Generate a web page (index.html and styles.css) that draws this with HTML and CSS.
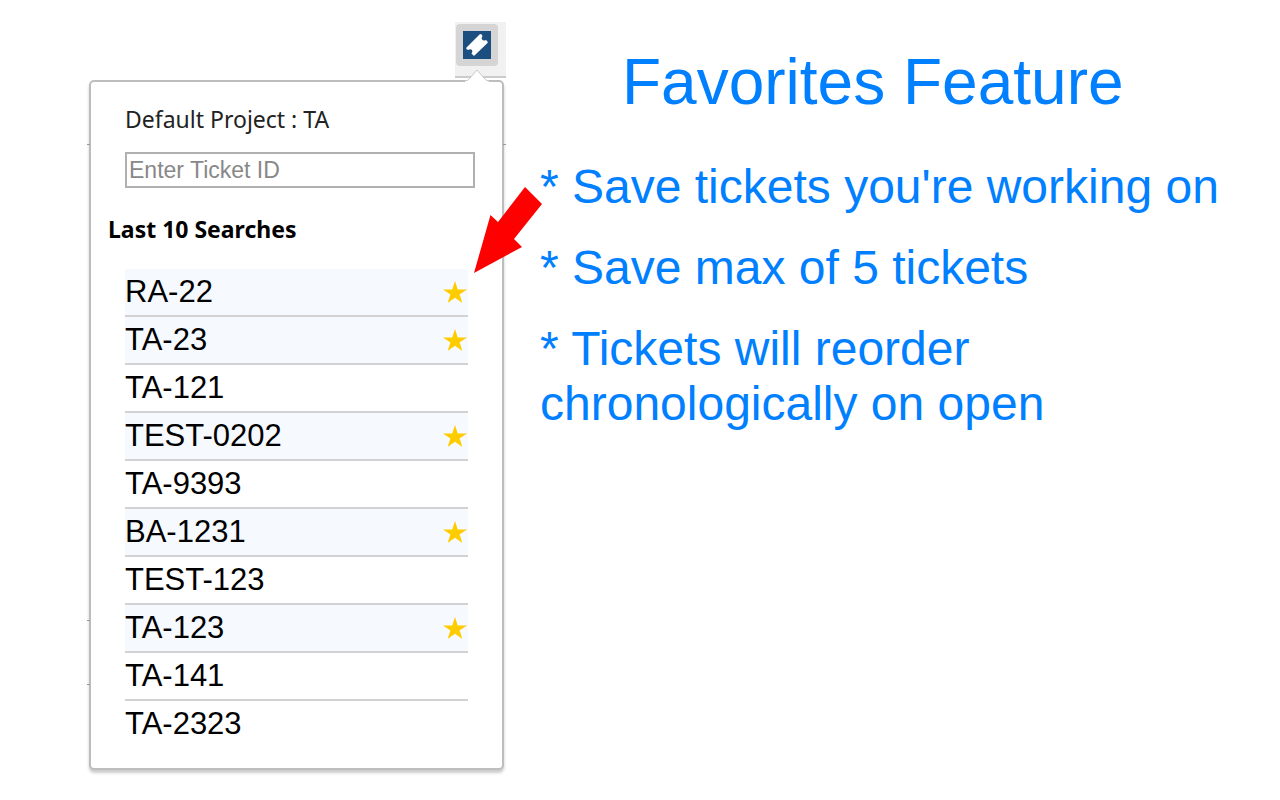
FILE: index.html
```html
<!DOCTYPE html>
<html lang="en">
<head>
<meta charset="utf-8">
<title>Favorites Feature</title>
<link rel="stylesheet" href="styles.css">
</head>
<body>
<main class="promo">
  <section class="extension">
    <div class="toolbar">
      <button class="toolbar-button" type="button" aria-label="Open ticket search">
        <svg width="28" height="28" viewBox="0 0 28 28" aria-hidden="true">
          <rect width="28" height="28" fill="#1d4e80"/>
          <path d="M3.500 16.500 L16.500 3.500 Q17.500 2.500 18.500 3.500 L19.500 5 Q18 7 19 8.500 Q20.500 10.300 23 9 L24.500 10.500 Q25 11.500 24.500 12 L11.500 24.500 Q10.500 25 10 24 L8.500 22.500 Q10 20.500 9 19 Q7.500 17.500 5 19 L3.500 18 Q2.800 17.300 3.500 16.500Z" fill="#fff"/>
        </svg>
      </button>
    </div>
    <div class="popup">
      <svg class="caret" width="26" height="14" viewBox="0 0 26 14" aria-hidden="true"><path d="M1 12 Q4 12 6 9 L13 1 L20 9 Q22 12 25 12 V14 H1Z" fill="#fff"/><path d="M1 12 Q4 12 6 9 L13 1 L20 9 Q22 12 25 12" fill="none" stroke="#c8c8c8"/></svg>
      <i class="tick tick-left-top"></i>
      <i class="tick tick-left-middle"></i>
      <i class="tick tick-left-bottom"></i>
      <i class="tick tick-right"></i>
      <svg class="arrow" width="68" height="87" viewBox="0 0 68 87" aria-hidden="true"><path d="M0 86 L16.500 28 L24 35 L51 0 L68 17 L40 52 L48 60 Z" fill="#f00"/></svg>
      <label class="project" for="ticket">Default Project : TA</label>
      <input class="ticket-input" id="ticket" type="text" placeholder="Enter Ticket ID">
      <h2 class="searches-title">Last 10 Searches</h2>
      <ul class="searches">
        <li class="search favorite">RA-22<svg class="star" viewBox="0 0 24 22"><path d="M12 0l2.800 8.400H24l-7.400 5.200L19.400 22 12 16.800 4.600 22l2.800-8.400L0 8.400h9.200z"/></svg></li>
        <li class="search favorite">TA-23<svg class="star" viewBox="0 0 24 22"><path d="M12 0l2.800 8.400H24l-7.400 5.200L19.400 22 12 16.800 4.600 22l2.800-8.400L0 8.400h9.200z"/></svg></li>
        <li class="search">TA-121</li>
        <li class="search favorite">TEST-0202<svg class="star" viewBox="0 0 24 22"><path d="M12 0l2.800 8.400H24l-7.400 5.200L19.400 22 12 16.800 4.600 22l2.800-8.400L0 8.400h9.200z"/></svg></li>
        <li class="search">TA-9393</li>
        <li class="search favorite">BA-1231<svg class="star" viewBox="0 0 24 22"><path d="M12 0l2.800 8.400H24l-7.400 5.200L19.400 22 12 16.800 4.600 22l2.800-8.400L0 8.400h9.200z"/></svg></li>
        <li class="search">TEST-123</li>
        <li class="search favorite">TA-123<svg class="star" viewBox="0 0 24 22"><path d="M12 0l2.800 8.400H24l-7.400 5.200L19.400 22 12 16.800 4.600 22l2.800-8.400L0 8.400h9.200z"/></svg></li>
        <li class="search">TA-141</li>
        <li class="search">TA-2323</li>
      </ul>
    </div>
  </section>
  <section class="feature">
    <h1 class="feature-title">Favorites Feature</h1>
    <div class="points">
      <p class="point">* Save tickets you're working on</p>
      <p class="point">* Save max of 5 tickets</p>
      <p class="point">* Tickets will reorder<br>chronologically on open</p>
    </div>
  </section>
</main>
</body>
</html>
```

FILE: styles.css
```css
* {
  box-sizing: border-box;
}

body {
  margin: 0;
  background: #fff;
  font-family: "Liberation Sans", Arial, sans-serif;
}

.promo {
  display: grid;
  grid-template-columns: 415px 1fr;
  column-gap: 36px;
  padding: 22px 24px 24px 89px;
}

.toolbar {
  width: 51px;
  height: 56px;
  margin: 0 -2px 2px auto;
  padding: 2px 1px;
  background: #f1f1f1;
  border-bottom: 2px solid #ccc;
}

.toolbar-button {
  display: flex;
  align-items: center;
  justify-content: center;
  width: 42px;
  height: 42px;
  padding: 0;
  border: 0;
  border-radius: 4px;
  background: #d5d5d5;
}

.popup {
  position: relative;
  padding: 21px 27px 19px 34px;
  border: 2px solid #bdbdbd;
  border-radius: 5px;
  background: #fff;
  box-shadow: 0 3px 3px #ccc;
}

.caret {
  position: absolute;
  top: -13px;
  right: 12px;
}

.arrow {
  position: absolute;
  top: 105px;
  right: -40px;
}

.tick {
  position: absolute;
  width: 3px;
  height: 1px;
  background: #999;
}

.tick-left-top {
  top: 62px;
  left: -4px;
}

.tick-left-middle {
  top: 538px;
  left: -4px;
}

.tick-left-bottom {
  top: 602px;
  left: -4px;
}

.tick-right {
  top: 62px;
  right: -4px;
}

.project {
  display: block;
  font: 23px/32px "Noto Sans", sans-serif;
  color: #222;
}

.ticket-input {
  display: block;
  width: 100%;
  height: 36px;
  margin: 17px 0 25px;
  padding: 0 2px;
  border: 2px solid #b0b0b0;
  border-radius: 0;
  font: 23px "Liberation Sans", Arial, sans-serif;
}

.ticket-input::placeholder {
  color: #888;
}

.searches-title {
  margin: 0 0 24px -17px;
  font: bold 23px/32px "Noto Sans", sans-serif;
  color: #000;
}

.searches {
  margin: 0 7px 0 0;
  padding: 0;
  list-style: none;
}

.search {
  display: flex;
  align-items: center;
  justify-content: space-between;
  height: 48px;
  padding-right: 1px;
  border-bottom: 2px solid #d2d2d2;
  font-size: 31px;
  line-height: 34px;
  color: #000;
}

.search:last-child {
  border-bottom-color: transparent;
}

.favorite {
  background: #f6faff;
}

.star {
  width: 24px;
  height: 22px;
  fill: #fc0;
}

.feature {
  color: #0080ff;
}

.feature-title {
  margin: 23px 0 40px 82px;
  font-size: 64px;
  font-weight: normal;
  line-height: 74px;
}

.points {
  display: flex;
  flex-direction: column;
  gap: 26px;
}

.point {
  margin: 0;
  font-size: 48px;
  line-height: 55px;
}
```
